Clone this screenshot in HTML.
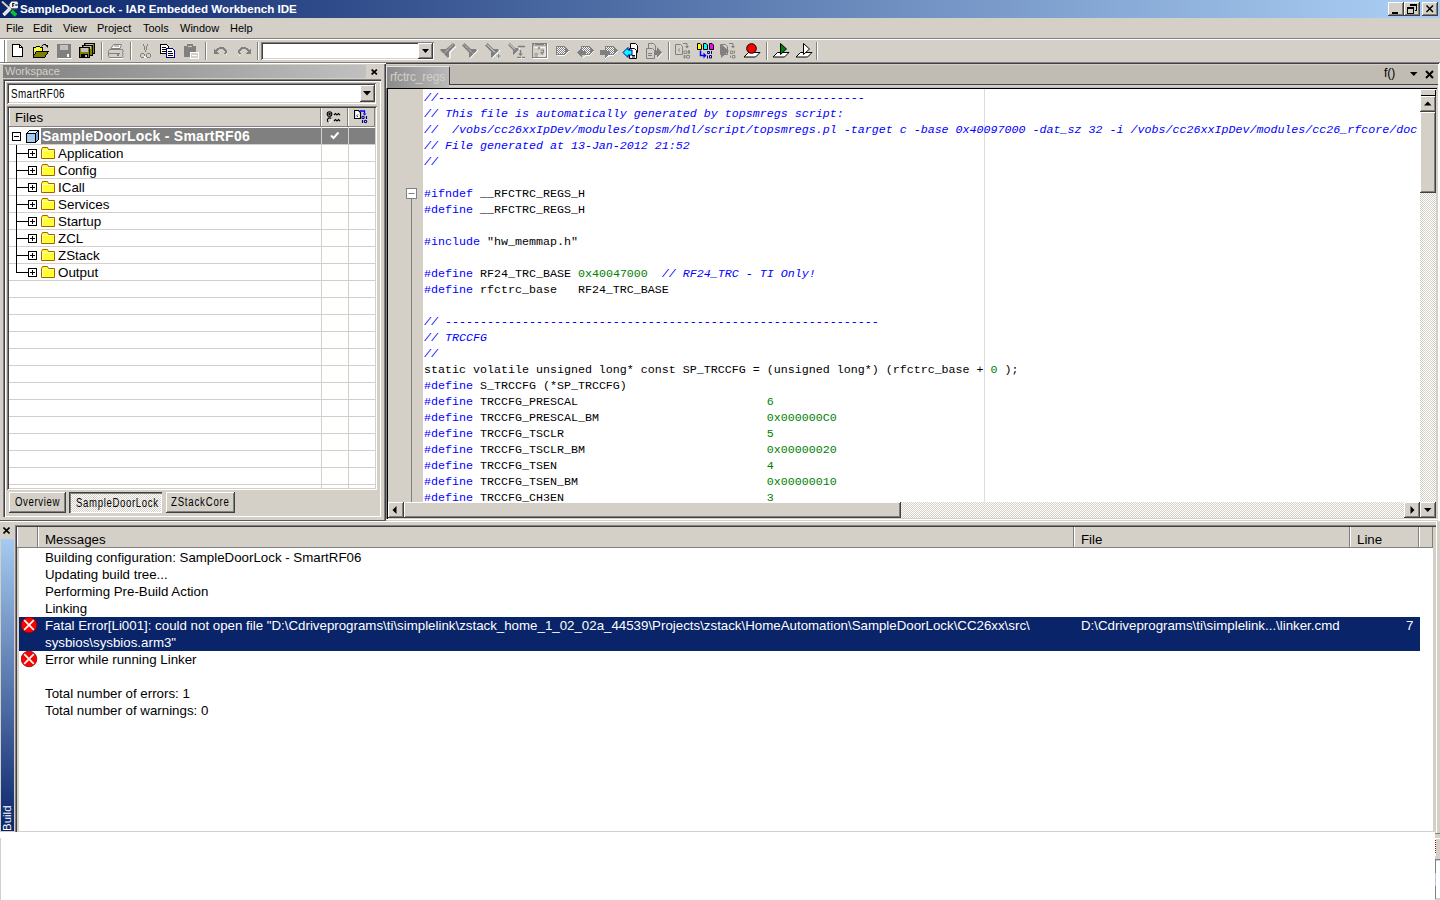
<!DOCTYPE html>
<html><head><meta charset="utf-8">
<style>
*{box-sizing:border-box;margin:0;padding:0}
html,body{width:1440px;height:900px;overflow:hidden;background:#d4d0c8;font-family:"Liberation Sans",sans-serif;position:relative}
.a{position:absolute}
.t{position:absolute;white-space:pre;line-height:1}
.raised{box-shadow:inset -1px -1px #404040,inset 1px 1px #fff,inset -2px -2px #808080,inset 2px 2px #d4d0c8;background:#d4d0c8}
.raised1{box-shadow:inset -1px -1px #808080,inset 1px 1px #fff;background:#d4d0c8}
.sunken{box-shadow:inset 1px 1px #808080,inset -1px -1px #fff,inset 2px 2px #404040,inset -2px -2px #d4d0c8}
.dither{background-color:#fff;background-image:linear-gradient(45deg,#d4d0c8 25%,transparent 25%,transparent 75%,#d4d0c8 75%),linear-gradient(45deg,#d4d0c8 25%,transparent 25%,transparent 75%,#d4d0c8 75%);background-size:2px 2px;background-position:0 0,1px 1px}
.code{font-family:"Liberation Mono",monospace;font-size:11.667px;line-height:16px;white-space:pre;color:#000}
.kw{color:#0000ff}
.cm{color:#0000ff;font-style:italic}
.nu{color:#008000}
.ui{font-size:13.3px;color:#000}
</style></head><body>

<!-- TITLE BAR -->
<div class="a" style="left:0;top:0;width:1440px;height:18px;background:linear-gradient(to right,#0a246a 0px,#a6caf0 1386px,#a6caf0 1440px)"></div>
<div class="t" style="left:20px;top:3px;font-weight:bold;font-size:11.6px;color:#fff">SampleDoorLock - IAR Embedded Workbench IDE</div>
<div class="a raised" style="left:1388px;top:2px;width:16px;height:14px"></div>
<div class="a raised" style="left:1404px;top:2px;width:16px;height:14px"></div>
<div class="a raised" style="left:1422px;top:2px;width:16px;height:14px"></div>

<svg class="a" style="left:0;top:0" width="20" height="18"><path d="M2.5 2L8.5 7.5" stroke="#d8d4c8" stroke-width="1.8" stroke-linecap="round"/><path d="M11.5 11L16 15.5" stroke="#00c830" stroke-width="3.8"/><path d="M3.5 15L10.5 8" stroke="#f0f0f0" stroke-width="3.4"/><path d="M4.5 14L10 8.5" stroke="#a0a0a0" stroke-width="0.8" stroke-dasharray="1 1"/><path d="M9.5 4L11.5 1.5H17L18 3V7.5L17 8.5H11.5L9.5 7Z" fill="#f4f4f4"/><path d="M11 9H17.5" stroke="#505050" stroke-width="1"/><path d="M12.7 7V3.5H14.5M12.7 5.2H14.2" fill="none" stroke="#202020" stroke-width="1.1"/><path d="M15.2 5H17.8" stroke="#202020" stroke-width="1.3"/></svg>
<svg class="a" style="left:1388px;top:2px" width="16" height="14" shape-rendering="crispEdges"><path d="M4 10H10V12H4Z" fill="#000"/></svg>
<svg class="a" style="left:1404px;top:2px" width="16" height="14" shape-rendering="crispEdges"><path d="M6.5 2.5H12.5V8.5H10.5" fill="none" stroke="#000"/><path d="M6 2H13V4H6Z" fill="#000"/><path d="M3.5 5.5H9.5V11.5H3.5Z" fill="none" stroke="#000"/><path d="M3 5H10V7H3Z" fill="#000"/></svg>
<svg class="a" style="left:1422px;top:2px" width="16" height="14"><path d="M4.5 3.5L11 10M11 3.5L4.5 10" stroke="#000" stroke-width="1.5"/></svg>
<!-- MENU -->
<div class="t" style="left:6px;top:23px;font-size:11px">File</div>
<div class="t" style="left:33px;top:23px;font-size:11px">Edit</div>
<div class="t" style="left:63px;top:23px;font-size:11px">View</div>
<div class="t" style="left:97px;top:23px;font-size:11px">Project</div>
<div class="t" style="left:143px;top:23px;font-size:11px">Tools</div>
<div class="t" style="left:180px;top:23px;font-size:11px">Window</div>
<div class="t" style="left:230px;top:23px;font-size:11px">Help</div>
<div class="a" style="left:0;top:38px;width:1440px;height:1px;background:#808080"></div>
<div class="a" style="left:0;top:39px;width:1440px;height:1px;background:#fff"></div>

<!-- TOOLBAR -->
<div class="a" style="left:0;top:40px;width:4px;height:22px;background:#fff"></div>
<div class="a" style="left:4px;top:40px;width:1px;height:22px;background:#808080"></div>
<div class="a" style="left:5px;top:40px;width:2px;height:22px;background:#fff"></div>
<div class="a" style="left:101px;top:42px;width:1px;height:18px;background:#808080"></div><div class="a" style="left:102px;top:42px;width:1px;height:18px;background:#fff"></div>
<div class="a" style="left:130px;top:42px;width:1px;height:18px;background:#808080"></div><div class="a" style="left:131px;top:42px;width:1px;height:18px;background:#fff"></div>
<div class="a" style="left:205px;top:42px;width:1px;height:18px;background:#808080"></div><div class="a" style="left:206px;top:42px;width:1px;height:18px;background:#fff"></div>
<div class="a" style="left:257px;top:42px;width:1px;height:18px;background:#808080"></div><div class="a" style="left:258px;top:42px;width:1px;height:18px;background:#fff"></div>
<div class="a" style="left:668px;top:42px;width:1px;height:18px;background:#808080"></div><div class="a" style="left:669px;top:42px;width:1px;height:18px;background:#fff"></div>
<div class="a" style="left:766px;top:42px;width:1px;height:18px;background:#808080"></div><div class="a" style="left:767px;top:42px;width:1px;height:18px;background:#fff"></div>
<div class="a" style="left:816px;top:42px;width:1px;height:18px;background:#808080"></div><div class="a" style="left:817px;top:42px;width:1px;height:18px;background:#fff"></div>
<svg class="a" style="left:12px;top:44px" width="12" height="14" shape-rendering="crispEdges"><path d="M0.5 0.5H7.5L10.5 3.5V12.5H0.5Z" fill="#fff" stroke="#000"/><path d="M7.5 0.5V3.5H10.5" fill="none" stroke="#000"/></svg>
<svg class="a" style="left:33px;top:43px" width="17" height="15" shape-rendering="crispEdges"><path d="M0.5 4.5H2.5L3.5 3.5H6.5L7.5 4.5H9.5V7.5H0.5Z" fill="#ffff00" stroke="#000"/><path d="M1 5H9V8H1Z" fill="#ffff00"/><path d="M2 6H3V7H2ZM4 5H5V6H4ZM6 6H7V7H6ZM4 7H5V8H4Z" fill="#fff"/><path d="M0.5 4.5V14.5H11.5L15.5 8.5H3.5L0.5 13" fill="#808000" stroke="#000"/><path d="M8.5 3.5Q10 0.5 13 1.5" fill="none" stroke="#000" shape-rendering="auto"/><path d="M12 2H15V5Z" fill="#000" shape-rendering="auto"/></svg>
<svg class="a" style="left:57px;top:44px" width="15" height="15" shape-rendering="crispEdges"><path d="M0 0H14V14H0Z" fill="#808080"/><path d="M3 1H11V6H3Z" fill="#c0c0c0"/><path d="M10 10H12V13H10Z" fill="#fff"/><path d="M1 14H15V1" fill="none" stroke="#fff"/></svg>
<svg class="a" style="left:79px;top:43px" width="17" height="16" shape-rendering="crispEdges"><path d="M5.5 0.5H15.5V10.5H5.5Z" fill="#808000" stroke="#000"/><path d="M7 1H14V4H7Z" fill="#c0c0c0"/><path d="M3.5 2.5H13.5V12.5H3.5Z" fill="#808000" stroke="#000"/><path d="M5 3H12V6H5Z" fill="#c0c0c0"/><path d="M0.5 4.5H10.5V14.5H0.5Z" fill="#808000" stroke="#000"/><path d="M2 5H9V8H2Z" fill="#c0c0c0"/><path d="M2 5H9V9H2Z" fill="#c0c0c0"/><path d="M2 11H9V15H2Z" fill="#000"/><path d="M6 12H8V14H6Z" fill="#c0c0c0"/></svg>
<svg class="a" style="left:108px;top:44px" width="17" height="15"><path d="M5.5 0.5H13.5L12 4.5H3Z" fill="#fff" stroke="#808080"/><path d="M6 2H11" stroke="#808080"/><path d="M1.5 5.5H14.5Q16 7 14.5 8.5Q16 10 14.5 11.5Q16 13 14.5 13.5H1.5Q0.5 12.5 0.5 11V7.5Q0.5 6 1.5 5.5Z" fill="#d4d0c8" stroke="#808080"/><path d="M1 9.5H12" stroke="#808080"/><path d="M9 10H11V12H9Z" fill="#808080"/><path d="M2 14.5H15" stroke="#fff"/></svg>
<svg class="a" style="left:140px;top:44px" width="11" height="15" shape-rendering="crispEdges"><path d="M3.5 0.5L5.5 8M7.5 0.5L5.5 8" stroke="#808080" fill="none"/><circle cx="2.5" cy="11.5" r="2" fill="none" stroke="#808080"/><circle cx="8.5" cy="11.5" r="2" fill="none" stroke="#808080"/><path d="M4 12.5L6 14" stroke="#fff"/></svg>
<svg class="a" style="left:160px;top:44px" width="16" height="14" shape-rendering="crispEdges"><path d="M0.5 0.5H6.5L8.5 2.5V9.5H0.5Z" fill="#fff" stroke="#000"/><path d="M2 3H6M2 5H6M2 7H6" stroke="#000"/><path d="M6.5 4.5H12.5L14.5 6.5V13.5H6.5Z" fill="#fff" stroke="#000080"/><path d="M8 7H12M8 9H13M8 11H13" stroke="#000"/></svg>
<svg class="a" style="left:183px;top:44px" width="18" height="16" shape-rendering="crispEdges"><path d="M1 2H13V13H1Z" fill="#808080"/><path d="M4 0H10V3H4Z" fill="#808080"/><path d="M5 2H9" stroke="#d4d0c8"/><path d="M7.5 8.5H15.5V14.5H7.5Z" fill="#d4d0c8" stroke="#fff"/><path d="M9 11H14" stroke="#fff"/></svg>
<svg class="a" style="left:214px;top:47px" width="14" height="9" shape-rendering="crispEdges"><path d="M2 4Q5 0 9 1Q13 3 11 7" fill="none" stroke="#808080" stroke-width="2"/><path d="M0 1L0 7L5 7Z" fill="#808080"/><path d="M12 8L13 7" stroke="#fff"/></svg>
<svg class="a" style="left:237px;top:47px" width="14" height="9" shape-rendering="crispEdges"><path d="M12 4Q9 0 5 1Q1 3 3 7" fill="none" stroke="#808080" stroke-width="2"/><path d="M14 1L14 7L9 7Z" fill="#808080"/><path d="M2 8L3 8" stroke="#fff"/></svg>
<div class="a sunken" style="left:261px;top:42px;width:173px;height:18px;background:#fff"></div>
<div class="a raised" style="left:418px;top:43px;width:15px;height:16px"></div>
<svg class="a" style="left:422px;top:49px" width="8" height="5" shape-rendering="crispEdges"><path d="M0 0H7L3.5 4Z" fill="#000" shape-rendering="auto"/></svg>
<svg class="a" style="left:440px;top:43px" width="17" height="16"><path d="M16 3L10 9V15H8" fill="none" stroke="#fff" stroke-width="1.2"/><path d="M13 0L15.5 2.5L9 9V14.5H7.5L0 7L1 6H6Z" fill="#808080"/><path d="M13 1.5L4 10.5" stroke="#fff" stroke-dasharray="1 1" stroke-width="0.9" shape-rendering="auto"/></svg>
<svg class="a" style="left:462px;top:43px" width="17" height="16"><path d="M8 15L16 7" fill="none" stroke="#fff" stroke-width="1.2"/><path d="M2.5 0L0 2.5L7 9.5V14.5H8L15 7.5L14 6H9Z" fill="#808080"/><path d="M2 1.5L11 10.5" stroke="#fff" stroke-dasharray="1 1" stroke-width="0.9"/></svg>
<svg class="a" style="left:485px;top:43px" width="18" height="16"><path d="M7 15L15 7" fill="none" stroke="#fff" stroke-width="1.2"/><path d="M2.5 0L0 2.5L6 8.5V14.5H7L14 7.5L13 6H8.5Z" fill="#808080"/><path d="M2 1.5L10 9.5" stroke="#fff" stroke-width="0.8"/><path d="M10.5 13H17M13.7 10V16" stroke="#fff" stroke-width="2.2"/><path d="M11 13H16.5M13.7 10.5V15.5" stroke="#808080" stroke-width="1.2"/></svg>
<svg class="a" style="left:508px;top:43px" width="18" height="16"><path d="M6 11L12 5" fill="none" stroke="#fff" stroke-width="1.2"/><path d="M2 0L0 2L5 7V11.5H6L11 6.5L10 5H7Z" fill="#808080"/><path d="M1.5 1L7 6.5" stroke="#fff" stroke-width="0.8"/><path d="M10 3.5H17" stroke="#808080" stroke-width="1.6"/><path d="M12.5 7V12" stroke="#808080" stroke-width="1.4"/><path d="M10 10.5L12.5 13L15 10.5Z" fill="#808080"/><path d="M9 14.5H13M14 14.5H17" stroke="#808080" stroke-width="1.6"/><path d="M9 15.8H17" stroke="#fff" stroke-width="0.8"/></svg>
<svg class="a" style="left:532px;top:43px" width="16" height="16"><rect x="0.5" y="0.5" width="14" height="14" fill="#d4d0c8" stroke="#808080"/><path d="M1 1.5H14" stroke="#808080" stroke-width="2"/><path d="M2 1.5H2.8M12.2 1.5H13" stroke="#fff" stroke-width="1"/><path d="M2.5 4.5H13V13H2.5" fill="none" stroke="#fff" stroke-width="0.8"/><path d="M2.5 11H6M2.5 13H6" stroke="#808080" stroke-width="1"/><path d="M6 4L8 6.5M8 4L6 6.5" stroke="#808080" stroke-width="0.9"/><path d="M9 7.5Q12 6 11.5 9L10 10.5" fill="none" stroke="#808080" stroke-width="1.2"/><path d="M8 9.5L11 12.5 10 9Z" fill="#808080"/><path d="M15.5 1V15.5H1" fill="none" stroke="#fff"/></svg>
<svg class="a" style="left:556px;top:46px" width="14" height="11" shape-rendering="crispEdges"><path d="M0 0H8L12.5 4.5L8 9H0Z" fill="#808080"/><path d="M1 9.5H8.5L13 5" fill="none" stroke="#fff"/><rect x="1" y="1" width="1" height="1" fill="#fff"/><rect x="3" y="1" width="1" height="1" fill="#fff"/><rect x="5" y="1" width="1" height="1" fill="#fff"/><rect x="7" y="1" width="1" height="1" fill="#fff"/><rect x="2" y="2" width="1" height="1" fill="#fff"/><rect x="4" y="2" width="1" height="1" fill="#fff"/><rect x="6" y="2" width="1" height="1" fill="#fff"/><rect x="8" y="2" width="1" height="1" fill="#fff"/><rect x="1" y="3" width="1" height="1" fill="#fff"/><rect x="3" y="3" width="1" height="1" fill="#fff"/><rect x="5" y="3" width="1" height="1" fill="#fff"/><rect x="7" y="3" width="1" height="1" fill="#fff"/><rect x="2" y="4" width="1" height="1" fill="#fff"/><rect x="4" y="4" width="1" height="1" fill="#fff"/><rect x="6" y="4" width="1" height="1" fill="#fff"/><rect x="8" y="4" width="1" height="1" fill="#fff"/><rect x="1" y="5" width="1" height="1" fill="#fff"/><rect x="3" y="5" width="1" height="1" fill="#fff"/><rect x="5" y="5" width="1" height="1" fill="#fff"/><rect x="7" y="5" width="1" height="1" fill="#fff"/><rect x="2" y="6" width="1" height="1" fill="#fff"/><rect x="4" y="6" width="1" height="1" fill="#fff"/><rect x="6" y="6" width="1" height="1" fill="#fff"/><rect x="8" y="6" width="1" height="1" fill="#fff"/><rect x="1" y="7" width="1" height="1" fill="#fff"/><rect x="3" y="7" width="1" height="1" fill="#fff"/><rect x="5" y="7" width="1" height="1" fill="#fff"/><rect x="7" y="7" width="1" height="1" fill="#fff"/></svg>
<svg class="a" style="left:577px;top:46px" width="18" height="13" shape-rendering="crispEdges"><path d="M4 0H12L16.5 4.5L12 9H4Z" fill="#808080"/><path d="M0 6.5L5 1.5V12L0 7Z" fill="#808080"/><path d="M5.5 12.5L8.5 9.5H12.5L17 5" fill="none" stroke="#fff"/><rect x="5" y="1" width="1" height="1" fill="#fff"/><rect x="7" y="1" width="1" height="1" fill="#fff"/><rect x="9" y="1" width="1" height="1" fill="#fff"/><rect x="11" y="1" width="1" height="1" fill="#fff"/><rect x="6" y="2" width="1" height="1" fill="#fff"/><rect x="8" y="2" width="1" height="1" fill="#fff"/><rect x="10" y="2" width="1" height="1" fill="#fff"/><rect x="12" y="2" width="1" height="1" fill="#fff"/><rect x="5" y="3" width="1" height="1" fill="#fff"/><rect x="7" y="3" width="1" height="1" fill="#fff"/><rect x="9" y="3" width="1" height="1" fill="#fff"/><rect x="11" y="3" width="1" height="1" fill="#fff"/><rect x="6" y="4" width="1" height="1" fill="#fff"/><rect x="8" y="4" width="1" height="1" fill="#fff"/><rect x="10" y="4" width="1" height="1" fill="#fff"/><rect x="12" y="4" width="1" height="1" fill="#fff"/><rect x="9" y="5" width="1" height="1" fill="#fff"/><rect x="11" y="5" width="1" height="1" fill="#fff"/><rect x="10" y="6" width="1" height="1" fill="#fff"/><rect x="12" y="6" width="1" height="1" fill="#fff"/><rect x="9" y="7" width="1" height="1" fill="#fff"/><rect x="11" y="7" width="1" height="1" fill="#fff"/></svg>
<svg class="a" style="left:600px;top:46px" width="18" height="13" shape-rendering="crispEdges"><path d="M5 0H13L17.5 4.5L13 9H5Z" fill="#808080"/><path d="M0 4H5V1L5 12L10.5 6.5V9H0Z" fill="#808080"/><path d="M5.5 12.5L9 9.5H13.5L18 5" fill="none" stroke="#fff"/><rect x="6" y="1" width="1" height="1" fill="#fff"/><rect x="8" y="1" width="1" height="1" fill="#fff"/><rect x="10" y="1" width="1" height="1" fill="#fff"/><rect x="12" y="1" width="1" height="1" fill="#fff"/><rect x="7" y="2" width="1" height="1" fill="#fff"/><rect x="9" y="2" width="1" height="1" fill="#fff"/><rect x="11" y="2" width="1" height="1" fill="#fff"/><rect x="13" y="2" width="1" height="1" fill="#fff"/><rect x="6" y="3" width="1" height="1" fill="#fff"/><rect x="8" y="3" width="1" height="1" fill="#fff"/><rect x="10" y="3" width="1" height="1" fill="#fff"/><rect x="12" y="3" width="1" height="1" fill="#fff"/><rect x="7" y="4" width="1" height="1" fill="#fff"/><rect x="9" y="4" width="1" height="1" fill="#fff"/><rect x="11" y="4" width="1" height="1" fill="#fff"/><rect x="13" y="4" width="1" height="1" fill="#fff"/><rect x="10" y="5" width="1" height="1" fill="#fff"/><rect x="12" y="5" width="1" height="1" fill="#fff"/><rect x="11" y="6" width="1" height="1" fill="#fff"/><rect x="13" y="6" width="1" height="1" fill="#fff"/><rect x="10" y="7" width="1" height="1" fill="#fff"/><rect x="12" y="7" width="1" height="1" fill="#fff"/></svg>
<svg class="a" style="left:622px;top:43px" width="18" height="16"><path d="M8.5 0.5H13.5L15.5 2.5V9.5H8.5Z" fill="#fff" stroke="#000"/><path d="M7.5 5.5H12.5L14.5 7.5V15.5H7.5Z" fill="#fff" stroke="#000"/><path d="M10 12.5H13M10 14H13" stroke="#000"/><path d="M1 9.5L6 4.5V7H10V12H6V14.5Z" fill="#00ffff" stroke="#0000a0" stroke-linejoin="miter"/></svg>
<svg class="a" style="left:646px;top:43px" width="18" height="16"><path d="M2.5 0.5H7.5L9.5 2.5V9.5H2.5Z" fill="#d4d0c8" stroke="#808080"/><path d="M0.5 5.5H6.5L8.5 7.5V15.5H0.5Z" fill="#d4d0c8" stroke="#808080"/><path d="M2 10.5H6M2 12.5H6" stroke="#808080"/><path d="M8 7.5H11V4L16 9.5 11 15V12H8Z" fill="#808080"/><path d="M11 15.5L16.5 10" stroke="#fff"/></svg>
<svg class="a" style="left:675px;top:43px" width="17" height="16"><path d="M0.5 1.5H5.5L7.5 3.5V11.5H0.5Z" fill="#d4d0c8" stroke="#808080"/><path d="M4.5 5.5Q2.5 7 4.5 8.5" fill="none" stroke="#808080"/><path d="M8 0.5H12V3" fill="none" stroke="#808080"/><path d="M10 3L12 5.5 14 3Z" fill="#808080"/><path d="M9 8H12V10.5H9ZM13.5 7.5H14.5V10.5H13.5ZM9 12.5H10V15H9ZM11.5 12.5H14.5V15H11.5Z" fill="none" stroke="#808080" stroke-width="0.9"/></svg>
<svg class="a" style="left:697px;top:43px" width="18" height="16"><path d="M0.5 0.5H3L4.5 2V6.5H0.5Z" fill="#ffff00" stroke="#000"/><path d="M6.5 0.5H9L10.5 2V6.5H6.5Z" fill="#00ffff" stroke="#000"/><path d="M12.5 0.5H15L16.5 2V6.5H12.5Z" fill="#ff00ff" stroke="#000"/><path d="M3.5 7.5V12.5H7" fill="none" stroke="#0000ff" stroke-width="1.5"/><path d="M6.5 9.5L9.5 12.5 6.5 15.5Z" fill="#0000ff"/><path d="M10.5 8.5H12.5V10.5H10.5ZM14.5 8V11M10.5 12.5V15.5M12.5 12.5H14.5V15H12.5Z" fill="none" stroke="#000080" stroke-width="1"/></svg>
<svg class="a" style="left:720px;top:43px" width="17" height="16"><path d="M1 1L9 8 1 15Z" fill="#808080"/><path d="M0.5 1.5H5.5L7.5 3.5V11.5H0.5Z" fill="none" stroke="#808080"/><path d="M9 0.5H13V3" fill="none" stroke="#808080"/><path d="M11 3L13 5.5 15 3Z" fill="#808080"/><path d="M10.5 8H13V10.5H10.5ZM14.5 7.5V10.5M10.5 12.5V15M12.5 12.5H15V15H12.5Z" fill="none" stroke="#808080" stroke-width="0.9"/></svg>
<svg class="a" style="left:744px;top:43px" width="17" height="15"><path d="M4.5 9.5H16L11.5 14H0Z" fill="#fff" stroke="#000" stroke-linejoin="miter"/><circle cx="7.5" cy="5.5" r="4.8" fill="#ff0000" stroke="#000"/></svg>
<svg class="a" style="left:773px;top:43px" width="17" height="15"><path d="M4.5 9.5H16L11.5 14H0Z" fill="#fff" stroke="#000" stroke-linejoin="miter"/><path d="M7.5 0.5L13.5 6 7.5 11.5Z" fill="#008000" stroke="#000"/></svg>
<svg class="a" style="left:796px;top:43px" width="17" height="15"><path d="M4.5 9.5H16L11.5 14H0Z" fill="#fff" stroke="#000" stroke-linejoin="miter"/><path d="M7.5 0.5L13.5 6 7.5 11.5Z" fill="#fff" stroke="#000"/></svg>
<div class="a" style="left:0;top:62px;width:1440px;height:1px;background:#808080"></div>
<div class="a" style="left:0;top:63px;width:1440px;height:1px;background:#fff"></div>

<!-- WORKSPACE -->
<div class="a" style="left:3px;top:65px;width:363px;height:13px;background:linear-gradient(to right,#808080,#c0c0c0)"></div>
<div class="t" style="left:5px;top:66px;font-size:11px;color:#d4d0c8">Workspace</div>
<svg class="a" style="left:371px;top:69px" width="7" height="6"><path d="M0.6 0.6L5.9 5.4M5.9 0.6L0.6 5.4" stroke="#000" stroke-width="1.7"/></svg>
<div class="a" style="left:3px;top:79px;width:378px;height:438px;box-shadow:inset 1px 1px #808080,inset 2px 2px #404040,inset -1px -1px #fff,inset 3px 3px #fff"></div>
<div class="a" style="left:384px;top:64px;width:1px;height:456px;background:#808080"></div>
<div class="a" style="left:385px;top:64px;width:1px;height:457px;background:#404040"></div><div class="a" style="left:386px;top:64px;width:1px;height:455px;background:#808080"></div>
<div class="a sunken" style="left:7px;top:83px;width:369px;height:21px;background:#fff"></div>
<div class="t" style="left:11px;top:88px;font-size:12.3px;letter-spacing:0.5px;transform:scaleX(0.8);transform-origin:0 0">SmartRF06</div>
<div class="a raised" style="left:360px;top:85px;width:15px;height:17px"></div>
<svg class="a" style="left:363px;top:91px" width="9" height="5"><path d="M0 0H8L4 4.5Z" fill="#000"/></svg>
<div class="a sunken" style="left:7px;top:106px;width:370px;height:384px;background:#fff"></div>
<div class="a" style="left:9px;top:144px;width:366px;height:1px;background:#d4d0c8"></div>
<div class="a" style="left:9px;top:161px;width:366px;height:1px;background:#d4d0c8"></div>
<div class="a" style="left:9px;top:178px;width:366px;height:1px;background:#d4d0c8"></div>
<div class="a" style="left:9px;top:195px;width:366px;height:1px;background:#d4d0c8"></div>
<div class="a" style="left:9px;top:212px;width:366px;height:1px;background:#d4d0c8"></div>
<div class="a" style="left:9px;top:229px;width:366px;height:1px;background:#d4d0c8"></div>
<div class="a" style="left:9px;top:246px;width:366px;height:1px;background:#d4d0c8"></div>
<div class="a" style="left:9px;top:263px;width:366px;height:1px;background:#d4d0c8"></div>
<div class="a" style="left:9px;top:280px;width:366px;height:1px;background:#d4d0c8"></div>
<div class="a" style="left:9px;top:297px;width:366px;height:1px;background:#d4d0c8"></div>
<div class="a" style="left:9px;top:314px;width:366px;height:1px;background:#d4d0c8"></div>
<div class="a" style="left:9px;top:331px;width:366px;height:1px;background:#d4d0c8"></div>
<div class="a" style="left:9px;top:348px;width:366px;height:1px;background:#d4d0c8"></div>
<div class="a" style="left:9px;top:365px;width:366px;height:1px;background:#d4d0c8"></div>
<div class="a" style="left:9px;top:382px;width:366px;height:1px;background:#d4d0c8"></div>
<div class="a" style="left:9px;top:399px;width:366px;height:1px;background:#d4d0c8"></div>
<div class="a" style="left:9px;top:416px;width:366px;height:1px;background:#d4d0c8"></div>
<div class="a" style="left:9px;top:433px;width:366px;height:1px;background:#d4d0c8"></div>
<div class="a" style="left:9px;top:450px;width:366px;height:1px;background:#d4d0c8"></div>
<div class="a" style="left:9px;top:467px;width:366px;height:1px;background:#d4d0c8"></div>
<div class="a" style="left:9px;top:484px;width:366px;height:1px;background:#d4d0c8"></div>
<div class="a" style="left:321px;top:127px;width:1px;height:361px;background:#d4d0c8"></div>
<div class="a" style="left:348px;top:127px;width:1px;height:361px;background:#d4d0c8"></div>
<div class="a" style="left:9px;top:108px;width:312px;height:19px;background:#d4d0c8;box-shadow:inset -1px -1px #808080,inset 1px 0 #fff"></div>
<div class="a" style="left:321px;top:108px;width:27px;height:19px;background:#d4d0c8;box-shadow:inset -1px -1px #808080,inset 1px 0 #fff"></div>
<div class="a" style="left:348px;top:108px;width:27px;height:19px;background:#d4d0c8;box-shadow:inset -1px -1px #808080,inset 1px 0 #fff"></div>
<div class="t ui" style="left:15px;top:111px">Files</div>
<svg class="a" style="left:326px;top:110px" width="16" height="14"><circle cx="3.5" cy="4" r="2.3" fill="none" stroke="#000" stroke-width="1.1"/><circle cx="3.5" cy="4" r="1.2" fill="#000"/><path d="M5.3 8.6A2.3 2.3 0 1 0 2.5 12.2" fill="none" stroke="#000" stroke-width="1.1"/><path d="M2.5 12.2A2.3 2.3 0 0 0 5.3 8.6" fill="none" stroke="#fff" stroke-width="1"/><path d="M8 5L9.5 3.5L11 5L12.5 3.5L14 5M8 11L9.5 9.5L11 11L12.5 9.5L14 11" fill="none" stroke="#000" stroke-width="1.1"/></svg><svg class="a" style="left:354px;top:110px" width="15" height="14"><path d="M0.5 0.5H4.5L6.5 2.5V8.5H0.5Z" fill="#fff" stroke="#000" stroke-width="1.2"/><path d="M4 4.5Q2 5.5 3.5 7" fill="none" stroke="#0000c0"/><path d="M6 1H10.5V3.5" fill="none" stroke="#0000ff" stroke-width="1.3"/><path d="M8.5 3.5L10.5 5.5 12.5 3.5Z" fill="#0000ff"/><circle cx="9" cy="7.5" r="1.2" fill="none" stroke="#000080" stroke-width="1.1"/><path d="M12.5 6V9M8.5 10V13" stroke="#000080" stroke-width="1.2"/><circle cx="11.5" cy="11.5" r="1.2" fill="none" stroke="#000080" stroke-width="1.1"/></svg>
<div class="a" style="left:41px;top:128px;width:280px;height:16px;background:#808080"></div>
<div class="a" style="left:322px;top:128px;width:26px;height:16px;background:#808080"></div>
<div class="a" style="left:349px;top:128px;width:26px;height:16px;background:#808080"></div>
<div class="t" style="left:42px;top:129px;font-weight:bold;font-size:14px;letter-spacing:0.25px;color:#fff">SampleDoorLock - SmartRF06</div>
<svg class="a" style="left:330px;top:131px" width="10" height="9"><path d="M1 4.5L3.5 7 8.5 1.5" fill="none" stroke="#fff" stroke-width="2"/></svg>
<svg class="a" style="left:12px;top:132px" width="10" height="10"><rect x="0.5" y="0.5" width="8" height="8" fill="#fff" stroke="#000"/><path d="M2 4.5H7" stroke="#000"/></svg>
<svg class="a" style="left:26px;top:129px" width="14" height="15" shape-rendering="crispEdges"><path d="M0.5 4.5L3.5 1.5H12.5V10.5L9.5 13.5H0.5Z" fill="#a8ccf0"/><path d="M1 4L4 2H12L9 4Z" fill="#d8f4ff"/><path d="M10 5L12 3V10L10 12Z" fill="#70a8e8"/><path d="M0.5 4.5L3.5 1.5H12.5V10.5L9.5 13.5H0.5ZM0.5 4.5H9.5V13.5M9.5 4.5L12.5 1.5" fill="none" stroke="#000"/></svg>
<div class="a" style="left:16px;top:145px;width:1px;height:128px;background:#000"></div>
<div class="a" style="left:17px;top:153px;width:11px;height:1px;background:#000"></div>
<svg class="a" style="left:28px;top:149px" width="10" height="10"><rect x="0.5" y="0.5" width="8" height="8" fill="#fff" stroke="#000"/><path d="M2 4.5H7M4.5 2V7" stroke="#000"/></svg>
<svg class="a" style="left:41px;top:147px" width="15" height="13"><path d="M0.5 2.5L1.5 0.5H6.5L7.5 2.5H13.5V11.5H0.5Z" fill="#ffff30" stroke="#a86000"/><path d="M1 3.5H13M1.5 4V11" stroke="#ffffc0"/></svg>
<div class="t ui" style="left:58px;top:147px;font-size:13.4px">Application</div>
<div class="a" style="left:17px;top:170px;width:11px;height:1px;background:#000"></div>
<svg class="a" style="left:28px;top:166px" width="10" height="10"><rect x="0.5" y="0.5" width="8" height="8" fill="#fff" stroke="#000"/><path d="M2 4.5H7M4.5 2V7" stroke="#000"/></svg>
<svg class="a" style="left:41px;top:164px" width="15" height="13"><path d="M0.5 2.5L1.5 0.5H6.5L7.5 2.5H13.5V11.5H0.5Z" fill="#ffff30" stroke="#a86000"/><path d="M1 3.5H13M1.5 4V11" stroke="#ffffc0"/></svg>
<div class="t ui" style="left:58px;top:164px;font-size:13.4px">Config</div>
<div class="a" style="left:17px;top:187px;width:11px;height:1px;background:#000"></div>
<svg class="a" style="left:28px;top:183px" width="10" height="10"><rect x="0.5" y="0.5" width="8" height="8" fill="#fff" stroke="#000"/><path d="M2 4.5H7M4.5 2V7" stroke="#000"/></svg>
<svg class="a" style="left:41px;top:181px" width="15" height="13"><path d="M0.5 2.5L1.5 0.5H6.5L7.5 2.5H13.5V11.5H0.5Z" fill="#ffff30" stroke="#a86000"/><path d="M1 3.5H13M1.5 4V11" stroke="#ffffc0"/></svg>
<div class="t ui" style="left:58px;top:181px;font-size:13.4px">ICall</div>
<div class="a" style="left:17px;top:204px;width:11px;height:1px;background:#000"></div>
<svg class="a" style="left:28px;top:200px" width="10" height="10"><rect x="0.5" y="0.5" width="8" height="8" fill="#fff" stroke="#000"/><path d="M2 4.5H7M4.5 2V7" stroke="#000"/></svg>
<svg class="a" style="left:41px;top:198px" width="15" height="13"><path d="M0.5 2.5L1.5 0.5H6.5L7.5 2.5H13.5V11.5H0.5Z" fill="#ffff30" stroke="#a86000"/><path d="M1 3.5H13M1.5 4V11" stroke="#ffffc0"/></svg>
<div class="t ui" style="left:58px;top:198px;font-size:13.4px">Services</div>
<div class="a" style="left:17px;top:221px;width:11px;height:1px;background:#000"></div>
<svg class="a" style="left:28px;top:217px" width="10" height="10"><rect x="0.5" y="0.5" width="8" height="8" fill="#fff" stroke="#000"/><path d="M2 4.5H7M4.5 2V7" stroke="#000"/></svg>
<svg class="a" style="left:41px;top:215px" width="15" height="13"><path d="M0.5 2.5L1.5 0.5H6.5L7.5 2.5H13.5V11.5H0.5Z" fill="#ffff30" stroke="#a86000"/><path d="M1 3.5H13M1.5 4V11" stroke="#ffffc0"/></svg>
<div class="t ui" style="left:58px;top:215px;font-size:13.4px">Startup</div>
<div class="a" style="left:17px;top:238px;width:11px;height:1px;background:#000"></div>
<svg class="a" style="left:28px;top:234px" width="10" height="10"><rect x="0.5" y="0.5" width="8" height="8" fill="#fff" stroke="#000"/><path d="M2 4.5H7M4.5 2V7" stroke="#000"/></svg>
<svg class="a" style="left:41px;top:232px" width="15" height="13"><path d="M0.5 2.5L1.5 0.5H6.5L7.5 2.5H13.5V11.5H0.5Z" fill="#ffff30" stroke="#a86000"/><path d="M1 3.5H13M1.5 4V11" stroke="#ffffc0"/></svg>
<div class="t ui" style="left:58px;top:232px;font-size:13.4px">ZCL</div>
<div class="a" style="left:17px;top:255px;width:11px;height:1px;background:#000"></div>
<svg class="a" style="left:28px;top:251px" width="10" height="10"><rect x="0.5" y="0.5" width="8" height="8" fill="#fff" stroke="#000"/><path d="M2 4.5H7M4.5 2V7" stroke="#000"/></svg>
<svg class="a" style="left:41px;top:249px" width="15" height="13"><path d="M0.5 2.5L1.5 0.5H6.5L7.5 2.5H13.5V11.5H0.5Z" fill="#ffff30" stroke="#a86000"/><path d="M1 3.5H13M1.5 4V11" stroke="#ffffc0"/></svg>
<div class="t ui" style="left:58px;top:249px;font-size:13.4px">ZStack</div>
<div class="a" style="left:17px;top:272px;width:11px;height:1px;background:#000"></div>
<svg class="a" style="left:28px;top:268px" width="10" height="10"><rect x="0.5" y="0.5" width="8" height="8" fill="#fff" stroke="#000"/><path d="M2 4.5H7M4.5 2V7" stroke="#000"/></svg>
<svg class="a" style="left:41px;top:266px" width="15" height="13"><path d="M0.5 2.5L1.5 0.5H6.5L7.5 2.5H13.5V11.5H0.5Z" fill="#ffff30" stroke="#a86000"/><path d="M1 3.5H13M1.5 4V11" stroke="#ffffc0"/></svg>
<div class="t ui" style="left:58px;top:266px;font-size:13.4px">Output</div>
<div class="a raised" style="left:9px;top:492px;width:57px;height:21px"></div>
<div class="t" style="left:15px;top:496px;font-size:12px;letter-spacing:0.8px;transform:scaleX(0.8);transform-origin:0 0">Overview</div>
<div class="a dither" style="left:69px;top:492px;width:93px;height:21px;box-shadow:inset 1px 1px #404040,inset 2px 2px #808080,inset -1px -1px #fff"></div>
<div class="t" style="left:76px;top:497px;font-size:12px;letter-spacing:0.8px;transform:scaleX(0.8);transform-origin:0 0">SampleDoorLock</div>
<div class="a raised" style="left:166px;top:492px;width:69px;height:21px"></div>
<div class="t" style="left:171px;top:496px;font-size:12px;letter-spacing:1px;transform:scaleX(0.8);transform-origin:0 0">ZStackCore</div>

<!-- EDITOR -->
<div class="a" style="left:386px;top:63px;width:1053px;height:1px;background:#404040"></div>
<div class="a" style="left:386px;top:64px;width:1053px;height:24px;background:#c0bcb4"></div>
<div class="a" style="left:386px;top:64px;width:1053px;height:1px;background:#d4d0c8"></div>
<div class="a" style="left:449px;top:84px;width:990px;height:1px;background:#404040"></div>
<div class="a" style="left:449px;top:67px;width:1px;height:18px;background:#404040"></div>
<div class="a" style="left:386px;top:85px;width:1053px;height:2px;background:#d0d0d0"></div>
<div class="a" style="left:386px;top:66px;width:63px;height:22px;background:linear-gradient(to right,#8a8a8a,#bababa);box-shadow:inset 1px 1px #e4e4e4"></div>
<div class="t" style="left:390px;top:71px;font-size:12px;color:#d4d0c8;letter-spacing:-0.15px">rfctrc_regs</div>
<div class="t" style="left:1384px;top:67px;font-size:12px;color:#000">f()</div>
<svg class="a" style="left:1410px;top:72px" width="8" height="5"><path d="M0 0H7.5L3.75 4Z" fill="#000"/></svg>
<svg class="a" style="left:1425px;top:70px" width="9" height="9"><path d="M1 1L8 8M8 1L1 8" stroke="#000" stroke-width="2"/></svg>
<div class="a" style="left:1438px;top:64px;width:2px;height:457px;background:#fff"></div>
<div class="a" style="left:387px;top:88px;width:1050px;height:1px;background:#000"></div>
<div class="a" style="left:387px;top:88px;width:1px;height:431px;background:#000"></div>
<div class="a" style="left:388px;top:89px;width:35px;height:413px;background:#d4d0c8"></div>
<div class="a" style="left:423px;top:89px;width:997px;height:413px;background:#fff"></div>
<div class="a" style="left:984px;top:89px;width:1px;height:413px;background:#dcdcdc"></div>
<svg class="a" style="left:406px;top:188px" width="11" height="11"><rect x="0.5" y="0.5" width="10" height="10" fill="#fff" stroke="#808080"/><path d="M2.5 5.5H8.5" stroke="#808080"/></svg>
<div class="a" style="left:411px;top:199px;width:1px;height:303px;background:#808080"></div>
<div class="a" style="left:423px;top:89px;width:997px;height:413px;overflow:hidden">
<div class="code" style="position:absolute;left:1px;top:1px"><span class="cm">//-------------------------------------------------------------</span>
<span class="cm">// This file is automatically generated by topsmregs script:</span>
<span class="cm">//  /vobs/cc26xxIpDev/modules/topsm/hdl/script/topsmregs.pl -target c -base 0x40097000 -dat_sz 32 -i /vobs/cc26xxIpDev/modules/cc26_rfcore/doc</span>
<span class="cm">// File generated at 13-Jan-2012 21:52</span>
<span class="cm">//</span>

<span class="kw">#ifndef</span> __RFCTRC_REGS_H
<span class="kw">#define</span> __RFCTRC_REGS_H

<span class="kw">#include</span> "hw_memmap.h"

<span class="kw">#define</span> RF24_TRC_BASE <span class="nu">0x40047000</span>  <span class="cm">// RF24_TRC - TI Only!</span>
<span class="kw">#define</span> rfctrc_base   RF24_TRC_BASE

<span class="cm">// --------------------------------------------------------------</span>
<span class="cm">// TRCCFG</span>
<span class="cm">//</span>
static volatile unsigned long* const SP_TRCCFG = (unsigned long*) (rfctrc_base + <span class="nu">0</span> );
<span class="kw">#define</span> S_TRCCFG (*SP_TRCCFG)
<span class="kw">#define</span> TRCCFG_PRESCAL                           <span class="nu">6</span>
<span class="kw">#define</span> TRCCFG_PRESCAL_BM                        <span class="nu">0x000000C0</span>
<span class="kw">#define</span> TRCCFG_TSCLR                             <span class="nu">5</span>
<span class="kw">#define</span> TRCCFG_TSCLR_BM                          <span class="nu">0x00000020</span>
<span class="kw">#define</span> TRCCFG_TSEN                              <span class="nu">4</span>
<span class="kw">#define</span> TRCCFG_TSEN_BM                           <span class="nu">0x00000010</span>
<span class="kw">#define</span> TRCCFG_CH3EN                             <span class="nu">3</span></div>
</div>
<div class="a dither" style="left:1420px;top:89px;width:16px;height:413px"></div>
<div class="a" style="left:1420px;top:89px;width:16px;height:7px;background:#d4d0c8;box-shadow:inset 1px 1px #fff,inset -1px -1px #000"></div>
<div class="a raised" style="left:1420px;top:96px;width:16px;height:16px"></div>
<svg class="a" style="left:1424px;top:101px" width="8" height="5"><path d="M0 4.5H7.5L3.75 0.5Z" fill="#000"/></svg>
<div class="a raised" style="left:1420px;top:112px;width:16px;height:81px"></div>
<div class="a dither" style="left:388px;top:502px;width:1048px;height:16px"></div>
<div class="a raised" style="left:388px;top:502px;width:16px;height:16px"></div>
<svg class="a" style="left:392px;top:506px" width="5" height="8"><path d="M4.5 0V8L0.5 4Z" fill="#000"/></svg>
<div class="a raised" style="left:404px;top:502px;width:497px;height:16px"></div>
<div class="a raised" style="left:1404px;top:502px;width:16px;height:16px"></div>
<svg class="a" style="left:1410px;top:506px" width="5" height="8"><path d="M0.5 0V8L4.5 4Z" fill="#000"/></svg>
<div class="a raised" style="left:1420px;top:502px;width:16px;height:16px"></div>
<svg class="a" style="left:1424px;top:508px" width="8" height="5"><path d="M0 0H7.5L3.75 4Z" fill="#000"/></svg>
<div class="a" style="left:386px;top:519px;width:1053px;height:1px;background:#fff"></div>

<!-- BUILD -->
<div class="a" style="left:0;top:520px;width:386px;height:1px;background:#5a5a5a"></div><div class="a" style="left:0;top:521px;width:1436px;height:1px;background:#fff"></div>
<svg class="a" style="left:3px;top:527px" width="7" height="7"><path d="M0.5 0.5L6.5 6.5M6.5 0.5L0.5 6.5" stroke="#000" stroke-width="1.6"/></svg>
<div class="a" style="left:1px;top:539px;width:13px;height:292px;background:linear-gradient(to bottom,#a6caf0,#0a246a)"></div>
<div class="t" style="left:2px;top:831px;font-size:11.5px;color:#fff;transform:rotate(-90deg);transform-origin:0 0">Build</div>
<div class="a" style="left:15px;top:525px;width:1421px;height:307px;background:#fff;box-shadow:inset 1px 1px #808080,inset 2px 2px #404040"></div>
<div class="a" style="left:17px;top:831px;width:1419px;height:1px;background:#d4d0c8"></div><div class="a" style="left:17px;top:527px;width:2px;height:304px;background:#d4d0c8"></div>
<div class="a" style="left:1433px;top:527px;width:3px;height:305px;background:#d4d0c8"></div>
<div class="a" style="left:1436px;top:521px;width:4px;height:312px;background:#d4d0c8;box-shadow:inset 1px 0 #fff"></div>
<div class="a" style="left:17px;top:527px;width:21px;height:21px;background:#d4d0c8;box-shadow:inset -1px -1px #808080,inset 1px 0 #fff"></div>
<div class="a" style="left:38px;top:527px;width:1036px;height:21px;background:#d4d0c8;box-shadow:inset -1px -1px #808080,inset 1px 0 #fff"></div>
<div class="a" style="left:1074px;top:527px;width:276px;height:21px;background:#d4d0c8;box-shadow:inset -1px -1px #808080,inset 1px 0 #fff"></div>
<div class="a" style="left:1350px;top:527px;width:69px;height:21px;background:#d4d0c8;box-shadow:inset -1px -1px #808080,inset 1px 0 #fff"></div>
<div class="a" style="left:1419px;top:527px;width:14px;height:21px;background:#d4d0c8;box-shadow:inset -1px -1px #808080,inset 1px 0 #fff"></div>
<div class="t ui" style="left:45px;top:533px">Messages</div>
<div class="t ui" style="left:1081px;top:533px">File</div>
<div class="t ui" style="left:1357px;top:533px">Line</div>
<div class="a" style="left:19px;top:617px;width:1401px;height:34px;background:#0a246a"></div>
<div class="t ui" style="left:45px;top:551px;color:#000">Building configuration: SampleDoorLock - SmartRF06</div>
<div class="t ui" style="left:45px;top:568px;color:#000">Updating build tree...</div>
<div class="t ui" style="left:45px;top:585px;color:#000">Performing Pre-Build Action</div>
<div class="t ui" style="left:45px;top:602px;color:#000">Linking</div>
<div class="t ui" style="left:45px;top:619px;color:#fff">Fatal Error[Li001]: could not open file &quot;D:\Cdriveprograms\ti\simplelink\zstack_home_1_02_02a_44539\Projects\zstack\HomeAutomation\SampleDoorLock\CC26xx\src\</div>
<div class="t ui" style="left:45px;top:636px;color:#fff">sysbios\sysbios.arm3&quot;</div>
<div class="t ui" style="left:45px;top:653px;color:#000">Error while running Linker</div>
<div class="t ui" style="left:45px;top:687px;color:#000">Total number of errors: 1</div>
<div class="t ui" style="left:45px;top:704px;color:#000">Total number of warnings: 0</div>
<div class="t ui" style="left:1081px;top:619px;color:#fff">D:\Cdriveprograms\ti\simplelink...\linker.cmd</div>
<div class="t ui" style="left:1406px;top:619px;color:#fff">7</div>
<svg class="a" style="left:21px;top:617px" width="17" height="17"><circle cx="8" cy="8" r="7.8" fill="#ff0000" stroke="#900" stroke-width="0.8"/><path d="M3.2 3.2L12.8 12.8M12.8 3.2L3.2 12.8" stroke="#f0f8f8" stroke-width="1.8"/></svg>
<svg class="a" style="left:21px;top:651px" width="17" height="17"><circle cx="8" cy="8" r="7.8" fill="#ff0000" stroke="#900" stroke-width="0.8"/><path d="M3.2 3.2L12.8 12.8M12.8 3.2L3.2 12.8" stroke="#f0f8f8" stroke-width="1.8"/></svg>
<div class="a" style="left:0;top:832px;width:1435px;height:68px;background:#fff"></div>
<div class="a" style="left:1435px;top:833px;width:5px;height:67px;background:#d4d0c8"></div>

<div class="a" style="left:0;top:838px;width:1px;height:62px;background:#d4d0c8"></div>
<div class="a" style="left:1435px;top:833px;width:5px;height:1px;background:#808080"></div>
<div class="a" style="left:1435px;top:838px;width:5px;height:18px;background:#d4d0c8;box-shadow:inset 1px 1px #fff"></div>
<div class="a" style="left:1435px;top:840px;width:1px;height:14px;background:repeating-linear-gradient(to bottom,#c00000 0 1px,transparent 1px 2px)"></div>
<div class="a" style="left:1435px;top:859px;width:5px;height:40px;background:#d4d0c8;box-shadow:inset 1px 1px #808080"></div>
<div class="a" style="left:1436px;top:861px;width:4px;height:37px;background:#fff"></div>
<div class="a" style="left:1435px;top:873px;width:1px;height:13px;background:#a6caf0"></div>
</body></html>
